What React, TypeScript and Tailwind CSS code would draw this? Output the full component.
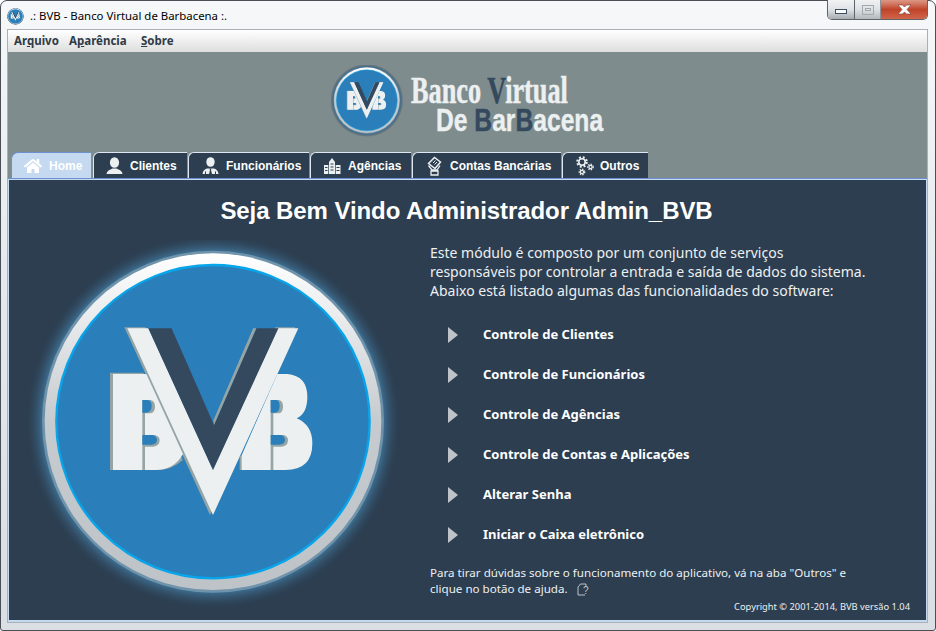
import React from "react";
import { FaHome } from "react-icons/fa";

const BvbLogo = ({ size }: { size: number }) => (
  <svg width={size} height={size} viewBox="0 0 1110 1110" className="shrink-0">
    <defs>
      <radialGradient id="halo" gradientUnits="userSpaceOnUse" cx="552" cy="545" r="565">
        <stop offset="0.9" stopColor="#3f7398" />
        <stop offset="1" stopColor="#2c3e50" stopOpacity="0" />
      </radialGradient>
      <linearGradient id="ring" x1="0" y1="0" x2="0" y2="1">
        <stop offset="0" stopColor="#ffffff" />
        <stop offset="0.5" stopColor="#c6cbcf" />
        <stop offset="1" stopColor="#bdc3c7" />
      </linearGradient>
    </defs>
    <circle cx="552" cy="545" r="565" fill="url(#halo)" />
    <circle cx="552" cy="545" r="513" fill="#6f93ab" />
    <circle cx="552" cy="545" r="505" fill="url(#ring)" />
    <circle cx="552" cy="545" r="470" fill="#2a7fba" stroke="#08a5ea" strokeWidth="7" />
    {/* sombra */}
    <g fill="#95a5a6" transform="translate(-9 0)">
      <path d="M252 398H352L470 660Q440 690 390 690H252Z" />
      <path d="M295 262H358L552 690L748 262H808L552 825Z" />
    </g>
    {/* B esquerdo */}
    <path fill="#ecf0f1" d="M252 402H352L462 642Q435 690 380 690H252Z" />
    <path fill="#95a5a6" d="M340 480H364Q378 482 378 500Q378 518 364 520H348V585H378Q392 590 392 600Q392 618 372 620H348V690H340Z" />
    <path fill="#2a7fba" d="M340 480H356Q368 482 368 498Q368 516 352 518H340ZM340 585H372Q384 590 384 600Q384 612 368 614H340Z" />
    {/* B direito */}
    <path fill="#ecf0f1" d="M745 402H775Q835 408 835 470Q835 520 803 535Q850 555 850 610Q850 690 770 690H636V650Z" />
    <path fill="#95a5a6" d="M725 480H750Q762 482 762 500Q762 518 750 520H733V585H765Q777 590 777 600Q777 618 758 620H733V690H725Z" />
    <path fill="#2a7fba" d="M725 480H742Q752 482 752 498Q752 516 738 518H725ZM725 585H757Q768 590 768 600Q768 612 752 614H725Z" />
    {/* V */}
    <path fill="#ecf0f1" d="M295 265H358L552 690L748 265H808L552 825Z" />
    <path fill="#95a5a6" d="M632 650L638 645V690H632Z" />
    <path fill="#34495e" d="M358 265H428L555 555L682 265H748L552 690Z" />
    <path fill="#95a5a6" d="M555 555L682 265H672L553 540Z" />
    <path fill="#2a7fba" d="M428 265H672L553 540Z" />
  </svg>
);

const PersonIcon = () => (
  <svg width="17" height="18" viewBox="0 0 17 18" className="shrink-0">
    <ellipse cx="8.5" cy="5.5" rx="4.6" ry="5.3" fill="#ecf0f1" />
    <path d="M0.5 17Q1 13.5 4.5 12.5L6.5 11.5H10.5L12.5 12.5Q16 13.5 16.5 17Z" fill="#ecf0f1" />
  </svg>
);

const SuitIcon = () => (
  <svg width="17" height="18" viewBox="0 0 17 18" className="shrink-0">
    <ellipse cx="8.5" cy="5" rx="4.2" ry="4.8" fill="#ecf0f1" />
    <path d="M0.5 17Q1 12.5 5 11.5H12Q16 12.5 16.5 17Z" fill="#ecf0f1" />
    <path d="M7.5 11.5H9.5L9 13L10 17H7L8 13Z" fill="#2c3e50" />
    <path d="M3.5 14.5V17M13.5 14.5V17" stroke="#2c3e50" strokeWidth="1" />
  </svg>
);

const BuildingIcon = () => (
  <svg width="17" height="18" viewBox="0 0 17 18" className="shrink-0">
    <path d="M5 17V5L8 1L11 5V17Z" fill="#ecf0f1" />
    <path d="M0 17V8H4.3V17ZM11.7 17V8H16.5V17Z" fill="#ecf0f1" />
    <path d="M6.5 7H9.5M6.5 10H9.5M6.5 13H9.5M1 10.5H3.5M1 13.5H3.5M12.5 10.5H15.5M12.5 13.5H15.5" stroke="#2c3e50" strokeWidth="1" />
  </svg>
);

const CardIcon = () => (
  <svg width="15" height="20" viewBox="0 0 15 20" className="shrink-0">
    <path d="M1.5 7.5L7.5 1.5L13.5 6L8 12.5Z" fill="none" stroke="#ecf0f1" strokeWidth="1.5" />
    <path d="M6 7L8.5 4.5M7.5 8.5L10 6" stroke="#ecf0f1" strokeWidth="1" />
    <path d="M1.5 9.5L5 14H10L13 9.5M4 15H11V19H4Z" fill="none" stroke="#ecf0f1" strokeWidth="1.3" />
  </svg>
);

const GearsIcon = () => (
  <svg width="18" height="20" viewBox="0 0 18 20" className="shrink-0" fill="none" stroke="#ecf0f1">
    <circle cx="6" cy="6" r="3.2" strokeWidth="1.6" />
    <circle cx="6" cy="6" r="4.8" strokeWidth="2" strokeDasharray="1.9 1.9" />
    <circle cx="14.5" cy="11" r="1.6" strokeWidth="1.2" />
    <circle cx="14.5" cy="11" r="2.7" strokeWidth="1.4" strokeDasharray="1.3 1.2" />
    <circle cx="6" cy="16" r="1.6" strokeWidth="1.2" />
    <circle cx="6" cy="16" r="2.7" strokeWidth="1.4" strokeDasharray="1.3 1.2" />
  </svg>
);

const HelpIcon = () => (
  <svg width="12" height="13" viewBox="0 0 12 13" className="ml-[9px] mt-[2px]">
    <path d="M3.5 1H9V3M1 4L3.5 1M1 4V12H8" fill="none" stroke="#bdc3c7" strokeWidth="1" />
    <text x="6" y="11" fill="#bdc3c7" fontSize="10" fontFamily="'Liberation Sans', sans-serif">?</text>
  </svg>
);

const CloseIcon = () => (
  <svg width="17" height="11" viewBox="0 0 17 11">
    <path d="M2 1H6.5L8.5 3L10.5 1H15L11 5.5L15 10H10.5L8.5 8L6.5 10H2L6 5.5Z" fill="#fff" stroke="#7a3a30" strokeWidth="0.6" />
  </svg>
);

const tabs = [
  { label: "Clientes", width: "w-[94px]", pad: "pl-[12px]", gap: "gap-[7px]", icon: <PersonIcon /> },
  { label: "Funcionários", width: "w-[121px]", pad: "pl-[13px]", gap: "gap-[7px]", icon: <SuitIcon /> },
  { label: "Agências", width: "w-[101px]", pad: "pl-[13px]", gap: "gap-[7px]", icon: <BuildingIcon /> },
  { label: "Contas Bancárias", width: "w-[149px]", pad: "pl-[14px]", gap: "gap-[8px]", icon: <CardIcon /> },
  { label: "Outros", width: "w-[86px]", pad: "pl-[13px]", gap: "gap-[6px]", icon: <GearsIcon /> },
];

const items = [
  "Controle de Clientes",
  "Controle de Funcionários",
  "Controle de Agências",
  "Controle de Contas e Aplicações",
  "Alterar Senha",
  "Iniciar o Caixa eletrônico",
];

export default function App() {
  return (
    <div className="w-[936px] h-[631px] overflow-hidden bg-white font-['Noto_Sans',sans-serif]">
      <div className="w-full h-full flex flex-col pl-[6px] pr-[7px] pb-[7px] border border-[#4a4f55] rounded-t-[7px] rounded-b-[3px] bg-gradient-to-b from-[#f6f8f9] via-[#e2e8ec] to-[#d9dfe3]">
        {/* barra de titulo */}
        <div className="h-[28px] shrink-0 flex items-start justify-between">
          <div className="flex items-center h-[28px] gap-[6px] pt-[2px]">
            <BvbLogo size={17} />
            <span className="text-[11.4px] text-black">.: BVB - Banco Virtual de Barbacena :.</span>
          </div>
          <div className="flex h-[20px] -mt-px border border-t-0 border-[#5f6468] rounded-b-[5px] overflow-hidden">
            <div className="w-[27px] flex items-center justify-center border-r border-[#5f6468] bg-gradient-to-b from-[#f1f3f4] via-[#dfe3e6] to-[#a6acb1]">
              <div className="w-[12px] h-[5px] mt-[3px] bg-white border border-[#3f4d63]" />
            </div>
            <div className="w-[26px] flex items-center justify-center border-r border-[#8d9398] bg-gradient-to-b from-[#eff1f2] via-[#dde1e4] to-[#b3b9bd]">
              <div className="w-[12px] h-[10px] border border-[#a2a8ad] flex items-center justify-center">
                <div className="w-[6px] h-[3px] border border-[#a2a8ad]" />
              </div>
            </div>
            <div className="w-[46px] flex items-center justify-center bg-gradient-to-b from-[#dc9886] via-[#bf4329] to-[#d0654b]">
              <CloseIcon />
            </div>
          </div>
        </div>

        {/* cliente */}
        <div className="flex-1 min-h-0 flex flex-col border border-[#a9b1b6]">
          {/* menu */}
          <div className="h-[22px] shrink-0 flex items-center pl-[6px] bg-gradient-to-b from-white to-[#dedede] text-[11.5px] font-bold text-[#2f3b47]">
            <span className="w-[55px]">Ar<span className="underline">q</span>uivo</span>
            <span className="w-[72px]">A<span className="underline">p</span>arência</span>
            <span><span className="underline">S</span>obre</span>
          </div>

          {/* cabecalho */}
          <div className="h-[100px] shrink-0 flex items-start justify-center bg-[#7f8c8d] pl-[2px]">
            <div className="flex items-start mt-[13px] ml-[5px]">
              <BvbLogo size={72} />
              <div className="ml-[8px] w-[200px] font-bold">
                <div className="text-[37px] leading-[30px] h-[30px] mt-[11px] text-[#ecf0f1] font-['Liberation_Serif',serif] origin-left scale-x-[0.71] whitespace-nowrap [-webkit-text-stroke:0.5px_#ecf0f1]">
                  Banco <span className="text-[#34495e] [-webkit-text-stroke:0.5px_#34495e]">V</span>irtual
                </div>
                <div className="text-[32px] leading-[26px] h-[26px] mt-px ml-[25px] text-[#ecf0f1] font-['Liberation_Sans',sans-serif] origin-left scale-x-[0.77] whitespace-nowrap [-webkit-text-stroke:0.4px_#ecf0f1]">
                  De <span className="text-[#34495e] [-webkit-text-stroke:0.4px_#34495e]">B</span>ar<span className="text-[#34495e] [-webkit-text-stroke:0.4px_#34495e]">B</span>acena
                </div>
              </div>
            </div>
          </div>

          {/* abas */}
          <div className="h-[26px] shrink-0 flex items-end gap-px pl-[3px] bg-[#7f8c8d] text-[12px] font-bold font-['Liberation_Sans',sans-serif]">
            <div className="w-[81px] h-[26px] flex items-center gap-[7px] pl-[12px] rounded-tl-[7px] border border-b-0 border-[#6d8fd0] bg-[#c5daf0] text-white">
              <FaHome size={18} />
              <span>Home</span>
            </div>
            {tabs.map((tab) => (
              <div
                key={tab.label}
                className={`${tab.width} ${tab.pad} ${tab.gap} h-[26px] flex items-center rounded-tl-[6px] border-t border-l border-[#dfe8f2] bg-[#2c3e50] text-white`}
              >
                {tab.icon}
                <span className="whitespace-nowrap">{tab.label}</span>
              </div>
            ))}
          </div>

          {/* painel */}
          <div className="flex-1 min-h-0 flex flex-col border-t border-[#6d8fd0] bg-[#c5daf0] pt-[1px] px-[1px] pb-[2px]">
            <div className="flex-1 min-h-0 flex flex-col bg-[#2c3e50] text-[#ecf0f1]">
              <h1 className="h-[60px] shrink-0 flex items-center justify-center pt-[2px] pr-[2px] text-[24px] tracking-[-0.08px] font-bold text-white font-['Liberation_Sans',sans-serif]">
                Seja Bem Vindo Administrador Admin_BVB
              </h1>
              <div className="flex-1 min-h-0 flex pl-[20px]">
                <BvbLogo size={370} />
                <div className="flex-1 flex flex-col pl-[31px] pt-[3px]">
                  <p className="text-[14px] leading-[19px]">
                    Este módulo é composto por um conjunto de serviços
                    <br />
                    responsáveis por controlar a entrada e saída de dados do sistema.
                    <br />
                    Abaixo está listado algumas das funcionalidades do software:
                  </p>
                  <ul className="mt-[15px] flex flex-col pl-[18px]">
                    {items.map((item) => (
                      <li key={item} className="h-[40px] flex items-center gap-[25px] text-[13px] font-bold text-white">
                        <span className="w-0 h-0 border-y-[8px] border-y-transparent border-l-[10px] border-l-[#bdc3c7]" />
                        {item}
                      </li>
                    ))}
                  </ul>
                  <p className="mt-[9px] text-[11.6px] leading-[17px]">
                    Para tirar dúvidas sobre o funcionamento do aplicativo, vá na aba "Outros" e
                  </p>
                  <p className="-mt-px flex items-center text-[11.6px] leading-[17px]">
                    clique no botão de ajuda.
                    <HelpIcon />
                  </p>
                  <p className="mt-[3px] pr-[16px] text-right text-[9.3px] leading-[14px]">Copyright © 2001-2014, BVB versão 1.04</p>
                </div>
              </div>
            </div>
          </div>
        </div>
      </div>
    </div>
  );
}
